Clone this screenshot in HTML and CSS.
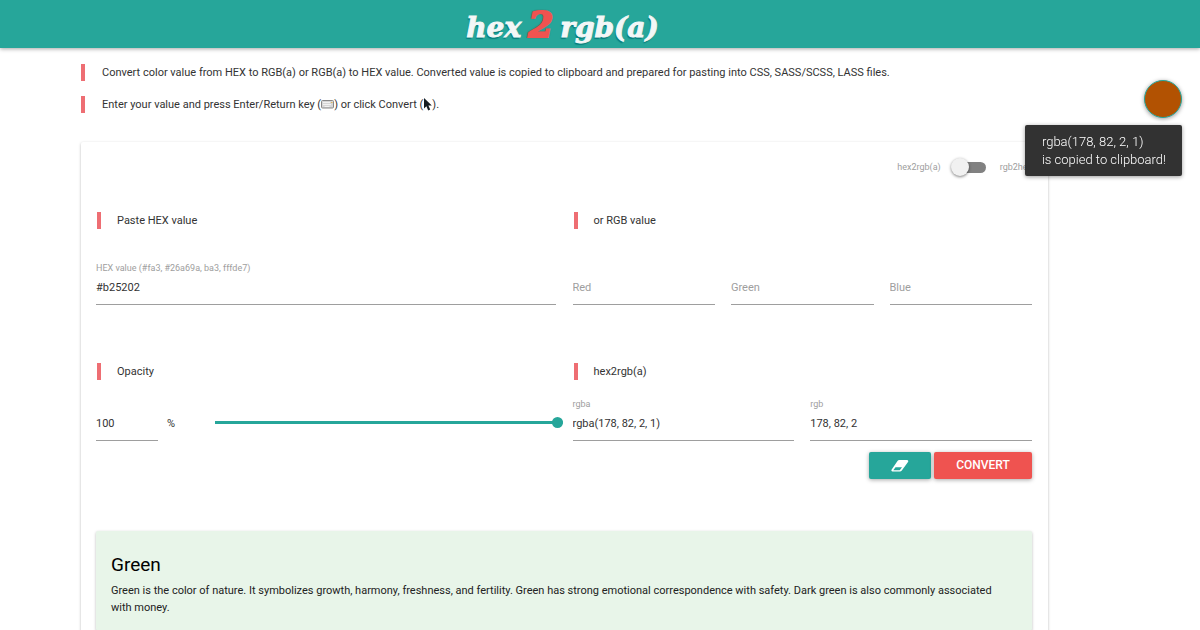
FILE: index.html
```html
<!DOCTYPE html>
<html lang="en">
<head>
<meta charset="utf-8">
<title>hex 2 rgb(a)</title>
<link rel="stylesheet" href="styles.css">
</head>
<body>
<header class="topbar">
  <h1 class="logo"><span class="logo-word">hex</span><span class="logo-two">2</span><span class="logo-word">rgb(a)</span></h1>
</header>
<main class="page">
  <section class="intro">
    <p class="note">Convert color value from HEX to RGB(a) or RGB(a) to HEX value. Converted value is copied to clipboard and prepared for pasting into CSS, SASS/SCSS, LASS files.</p>
    <p class="note">Enter your value and press Enter/Return key (<svg class="key-icon" viewBox="0 0 13 9" aria-hidden="true"><rect x=".5" y=".5" width="12" height="7.5" rx="1" fill="#d6d6d6" stroke="#888"/><path d="M2 2.5h7M2 4.5h8M3.500 6.500h5" stroke="#f1f1f1"/><path d="M10 2.500h1.500" stroke="#dfb75c"/></svg>) or click Convert (<svg class="cursor-icon" viewBox="0 0 9 13" aria-hidden="true"><path d="M1 0v10.500l2.400-2.200 1.800 4.200 2-.9-1.800-4H8.800z" fill="#151d22"/></svg>).</p>
  </section>
  <form class="card">
    <div class="mode">
      <label for="mode">hex2rgb(a)</label>
      <input class="switch" type="checkbox" id="mode">
      <label for="mode">rgb2hex</label>
    </div>
    <div class="columns inputs">
      <section>
        <h2 class="note title">Paste HEX value</h2>
        <div class="fields fields-top">
          <div class="field"><label for="hex">HEX value (#fa3, #26a69a, ba3, fffde7)</label><input id="hex" type="text" value="#b25202"></div>
        </div>
      </section>
      <section>
        <h2 class="note title">or RGB value</h2>
        <div class="fields fields-top">
          <div class="field"><input type="text" placeholder="Red" aria-label="Red"></div>
          <div class="field"><input type="text" placeholder="Green" aria-label="Green"></div>
          <div class="field"><input type="text" placeholder="Blue" aria-label="Blue"></div>
        </div>
      </section>
    </div>
    <div class="columns">
      <section>
        <h2 class="note title">Opacity</h2>
        <div class="fields opacity">
          <div class="field percent"><input id="opacity" type="text" value="100" aria-label="Opacity"></div>
          <label class="unit" for="opacity">%</label>
          <input class="slider" type="range" min="0" max="100" value="100" aria-label="Opacity slider">
        </div>
      </section>
      <section>
        <h2 class="note title">hex2rgb(a)</h2>
        <div class="fields">
          <div class="field"><label for="rgba">rgba</label><input id="rgba" type="text" value="rgba(178, 82, 2, 1)"></div>
          <div class="field"><label for="rgb">rgb</label><input id="rgb" type="text" value="178, 82, 2"></div>
        </div>
      </section>
    </div>
    <div class="actions">
      <button class="btn btn-clear" type="reset" aria-label="Clear"><svg class="eraser" viewBox="0 0 18 12" aria-hidden="true"><path fill="#fff" fill-rule="evenodd" d="M8.300 0H16c1.200 0 1.700 1 1 2l-6.200 8.600c-.5.700-1.100 1-1.800 1H1.600C.4 11.600 0 10.500.7 9.600L6.500 1C6.900.3 7.500 0 8.300 0zM4.500 7.200 2.300 10.300h6.400l2.300-3.100z"/></svg></button>
      <button class="btn btn-convert" type="button">CONVERT</button>
    </div>
    <article class="color-info">
      <h3>Green</h3>
      <p>Green is the color of nature. It symbolizes growth, harmony, freshness, and fertility. Green has strong emotional correspondence with safety. Dark green is also commonly associated with money.</p>
    </article>
  </form>
</main>
<aside class="floating">
  <button class="swatch" type="button" aria-label="Current color"></button>
  <div class="toast" role="status">rgba(178, 82, 2, 1)<br>is copied to clipboard!</div>
</aside>
</body>
</html>
```
FILE: styles.css
```css
* { box-sizing: border-box; }
body {
  margin: 0;
  background: #fff;
  color: #333;
  font: 11px/17px Roboto, sans-serif;
}
h1, h2, h3, p { margin: 0; }
.topbar {
  height: 48px;
  padding-right: 75px;
  background: #26a69a;
  box-shadow: 0 1px 4px rgba(0, 0, 0, .35);
  display: flex;
  justify-content: center;
}
.logo {
  display: flex;
  align-items: baseline;
  gap: 7px;
  font: italic bold 28px/48px "DejaVu Serif", serif;
  color: #f3f7f7;
}
.logo-word {
  -webkit-text-stroke: 1px #f3f7f7;
  text-shadow: -1px 2px 1px #087c7c;
}
.logo-two {
  font-size: 36px;
  color: #ef5350;
  -webkit-text-stroke: 2px #ef5350;
  text-shadow: 0 0 2px #7c2f2f, 0 0 2px #7c2f2f;
}
.page { padding: 16px 152px 0 81px; }
.intro { display: grid; gap: 15px; }
.note {
  border-left: 4px solid #ee6e73;
  padding-left: 17px;
  font-size: 11px;
  line-height: 17px;
  font-weight: 400;
}
.key-icon { width: 13px; height: 9px; vertical-align: -1px; }
.cursor-icon { width: 9px; height: 13px; vertical-align: -3px; }
.card {
  margin-top: 29px;
  padding: 16px 16px 20px 15px;
  border-radius: 2px;
  box-shadow: 0 1px 3px rgba(0, 0, 0, .28);
}
.mode {
  display: flex;
  align-items: center;
  justify-content: flex-end;
  gap: 14px;
  height: 18px;
  color: #9e9e9e;
  font-size: 9px;
}
.switch {
  appearance: none;
  position: relative;
  width: 31px;
  height: 11px;
  margin: 0;
  border-radius: 6px;
  background: #818181;
}
.switch::before {
  content: "";
  position: absolute;
  left: -4px;
  top: -4px;
  width: 18px;
  height: 18px;
  border-radius: 50%;
  background: #f1f1f1;
  box-shadow: 0 1px 3px rgba(0, 0, 0, .5);
}
.columns {
  display: grid;
  grid-template-columns: 1fr 1fr;
  gap: 17px;
}
.inputs { margin: 36px 0 58px; }
.title { padding-left: 16px; margin-left: 1px; }
.fields {
  display: flex;
  align-items: flex-end;
  gap: 16px;
  height: 61px;
}
.fields-top { height: 76px; }
.field { flex: 1; min-width: 0; }
.field label {
  display: block;
  font-size: 9px;
  line-height: 12px;
  color: #9e9e9e;
}
.field input {
  display: block;
  width: 100%;
  height: 31px;
  padding: 0 0 3px;
  border: 0;
  border-bottom: 1px solid #9e9e9e;
  background: none;
  color: #333;
  font: inherit;
  outline: 0;
}
.field input::placeholder { color: #9e9e9e; opacity: 1; }
.opacity { gap: 0; }
.percent { flex: 0 0 62px; }
.unit { width: 57px; padding-left: 9px; height: 26px; }
.slider {
  appearance: none;
  flex: 1;
  min-width: 0;
  height: 11px;
  margin: 0 -7px 13px 0;
  background: linear-gradient(#26a69a, #26a69a) center / 100% 3px no-repeat;
}
.slider::-webkit-slider-thumb {
  appearance: none;
  width: 11px;
  height: 11px;
  border-radius: 50%;
  background: #26a69a;
}
.actions {
  display: flex;
  justify-content: flex-end;
  gap: 3px;
  margin-top: 11px;
}
.btn {
  height: 27px;
  padding: 0;
  border: 0;
  border-radius: 2px;
  color: #fff;
  font: 500 12px/27px Roboto, sans-serif;
  box-shadow: 0 1px 4px rgba(0, 0, 0, .35);
}
.btn-clear { width: 62px; background: #26a69a; }
.btn-convert { width: 98px; background: #ef5350; }
.eraser { width: 18px; height: 12px; vertical-align: middle; }
.color-info {
  margin-top: 52px;
  padding: 22px 20px 15px 15px;
  background: #e8f5e9;
  border-radius: 2px;
  box-shadow: 0 1px 3px rgba(0, 0, 0, .28);
  color: #222;
}
.color-info h3 {
  margin-bottom: 5px;
  color: #000;
  font-size: 19px;
  line-height: 24px;
  font-weight: 400;
}
.floating {
  position: fixed;
  top: 80px;
  right: 18px;
  display: flex;
  flex-direction: column;
  align-items: flex-end;
  gap: 7px;
}
.swatch {
  width: 38px;
  height: 38px;
  padding: 0;
  border: 1px solid #26a69a;
  border-radius: 50%;
  background: #b25202;
  box-shadow: 0 1px 4px rgba(0, 0, 0, .4);
}
.toast {
  padding: 8px 16px 7px 17px;
  border-radius: 2px;
  background: #323232;
  color: #fff;
  font-size: 13px;
  line-height: 18px;
  font-weight: 300;
  box-shadow: 0 1px 4px rgba(0, 0, 0, .4);
}
```
